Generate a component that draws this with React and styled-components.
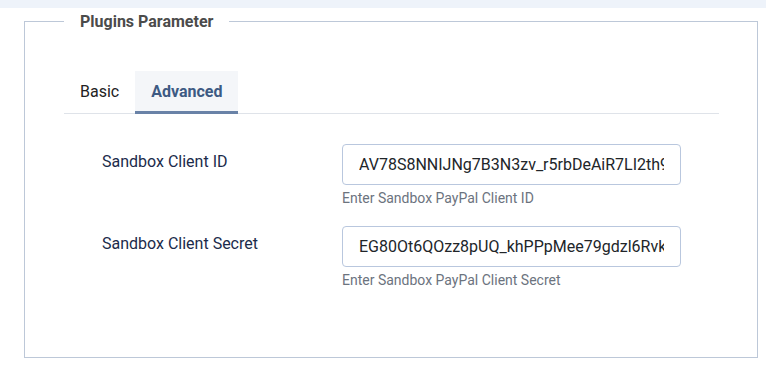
import React, { useState } from "react";
import styled, { createGlobalStyle } from "styled-components";

const GlobalStyle = createGlobalStyle`
  * { box-sizing: border-box; }
  html, body { margin: 0; padding: 0; background: #fff; }
  body { font-family: Roboto, "Noto Sans", sans-serif; }
`;

const TopStrip = styled.div`
  height: 8px;
  background: #eef3fa;
`;

const Fieldset = styled.fieldset`
  margin: 4px 8px 0 24px;
  padding: 0 38px 0 39px;
  height: 346px;
  border: 1px solid #bdc8d8;
  border-radius: 0;
  min-width: 0;
`;

const Legend = styled.legend`
  margin-left: 0;
  padding: 0 16px;
  font-size: 16px;
  font-weight: 700;
  color: #4b4b4b;
  line-height: 19px;
`;

const TabBar = styled.div`
  display: flex;
  margin-top: 40px;
  border-bottom: 1px solid #dfe3e9;
`;

const Tab = styled.button`
  font-family: inherit;
  font-size: 16px;
  height: 43px;
  padding: 0 16px;
  border: none;
  margin-bottom: -1px;
  border-bottom: 3px solid ${(p) => (p.$active ? "#6982a7" : "transparent")};
  background: ${(p) => (p.$active ? "#f4f6f9" : "transparent")};
  color: ${(p) => (p.$active ? "#3d5a83" : "#222")};
  font-weight: ${(p) => (p.$active ? 700 : 400)};
  cursor: pointer;
`;

const Rows = styled.div`
  display: flex;
  flex-direction: column;
  gap: 19px;
  padding: 30px 0 0 38px;
`;

const Row = styled.div`
  display: grid;
  grid-template-columns: 240px 339px;
`;

const Label = styled.label`
  font-size: 16px;
  color: #1b2b4b;
  padding-top: 8px;
`;

const Field = styled.div`
  display: flex;
  flex-direction: column;
`;

const Input = styled.input`
  height: 41px;
  width: 100%;
  padding: 0 16px;
  font-family: inherit;
  font-size: 16px;
  color: #212529;
  border: 1px solid #b9c7de;
  border-radius: 4px;
  outline: none;
`;

const Help = styled.div`
  margin-top: 4px;
  font-size: 14px;
  line-height: 18px;
  color: #6c737e;
`;

const fields = [
  {
    label: "Sandbox Client ID",
    value: "AV78S8NNIJNg7B3N3zv_r5rbDeAiR7LI2th9kQxW3pLm",
    help: "Enter Sandbox PayPal Client ID",
  },
  {
    label: "Sandbox Client Secret",
    value: "EG80Ot6QOzz8pUQ_khPPpMee79gdzl6RvkT2aZ8nYc",
    help: "Enter Sandbox PayPal Client Secret",
  },
];

export default function App() {
  const [tab, setTab] = useState("advanced");
  return (
    <>
      <GlobalStyle />
      <TopStrip />
      <Fieldset>
        <Legend>Plugins Parameter</Legend>
        <TabBar>
          <Tab $active={tab === "basic"} onClick={() => setTab("basic")}>
            Basic
          </Tab>
          <Tab $active={tab === "advanced"} onClick={() => setTab("advanced")}>
            Advanced
          </Tab>
        </TabBar>
        <Rows>
          {fields.map((f) => (
            <Row key={f.label}>
              <Label>{f.label}</Label>
              <Field>
                <Input defaultValue={f.value} />
                <Help>{f.help}</Help>
              </Field>
            </Row>
          ))}
        </Rows>
      </Fieldset>
    </>
  );
}
